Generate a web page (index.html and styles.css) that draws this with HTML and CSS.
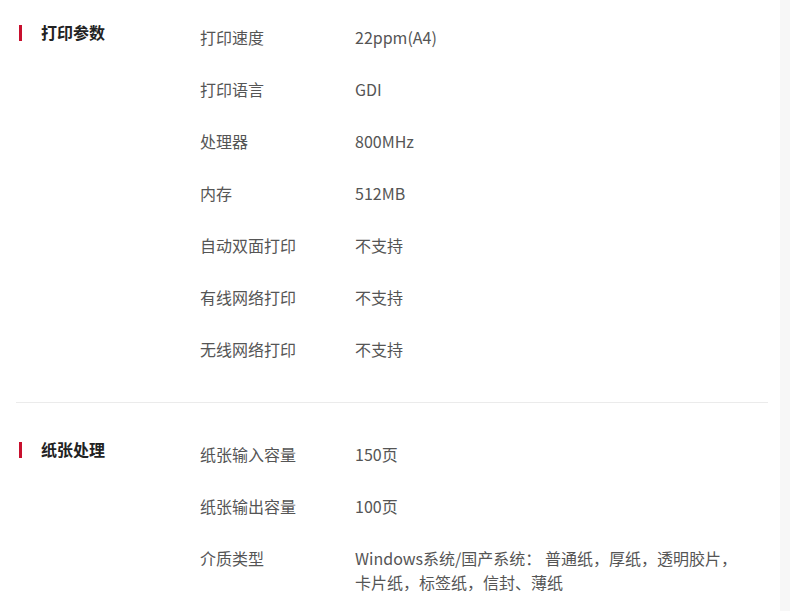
FILE: index.html
```html
<!DOCTYPE html>
<html lang="zh-CN">
<head>
<meta charset="utf-8">
<link rel="stylesheet" href="styles.css">
</head>
<body>
<div class="page">
  <section class="group group-first">
    <h3 class="group-title">打印参数</h3>
    <div class="rows">
      <div class="row"><span class="label">打印速度</span><span class="value">22ppm(A4)</span></div>
      <div class="row"><span class="label">打印语言</span><span class="value">GDI</span></div>
      <div class="row"><span class="label">处理器</span><span class="value">800MHz</span></div>
      <div class="row"><span class="label">内存</span><span class="value">512MB</span></div>
      <div class="row"><span class="label">自动双面打印</span><span class="value">不支持</span></div>
      <div class="row"><span class="label">有线网络打印</span><span class="value">不支持</span></div>
      <div class="row"><span class="label">无线网络打印</span><span class="value">不支持</span></div>
    </div>
  </section>
  <section class="group">
    <h3 class="group-title">纸张处理</h3>
    <div class="rows">
      <div class="row"><span class="label">纸张输入容量</span><span class="value">150页</span></div>
      <div class="row"><span class="label">纸张输出容量</span><span class="value">100页</span></div>
      <div class="row"><span class="label">介质类型</span><span class="value">Windows系统/国产系统： 普通纸，厚纸，透明胶片，卡片纸，标签纸，信封、薄纸</span></div>
    </div>
  </section>
</div>
</body>
</html>
```
FILE: styles.css
```css
html, body {
  margin: 0;
  padding: 0;
  background: #f7f7f7;
}
body {
  font-family: "Noto Sans CJK SC", "Noto Sans", sans-serif;
  color: #555;
}
.page {
  width: 780px;
  height: 611px;
  overflow: hidden;
  background: #fff;
  padding: 0 12px 0 16px;
  box-sizing: border-box;
}
.group {
  display: flex;
  padding: 25px 0 26px 0;
  border-bottom: 1px solid #ebebeb;
}
.group-first {
  padding-top: 11px;
  padding-bottom: 27px;
}
.group-title {
  width: 184px;
  flex-shrink: 0;
  margin: 9px 0 0 0;
  padding-left: 25px;
  box-sizing: border-box;
  font-size: 16px;
  line-height: 24px;
  height: 24px;
  font-weight: bold;
  color: #222;
  position: relative;
}
.group-title::before {
  content: "";
  position: absolute;
  left: 3px;
  top: 5px;
  width: 3px;
  height: 16px;
  background: #c8102e;
}
.rows {
  flex: 1;
  min-width: 0;
}
.row {
  display: flex;
  padding: 14px 0;
  font-size: 16px;
  line-height: 24px;
}
.label {
  width: 155px;
  flex-shrink: 0;
}
.value {
  flex: 1;
  padding-right: 30px;
}
```
